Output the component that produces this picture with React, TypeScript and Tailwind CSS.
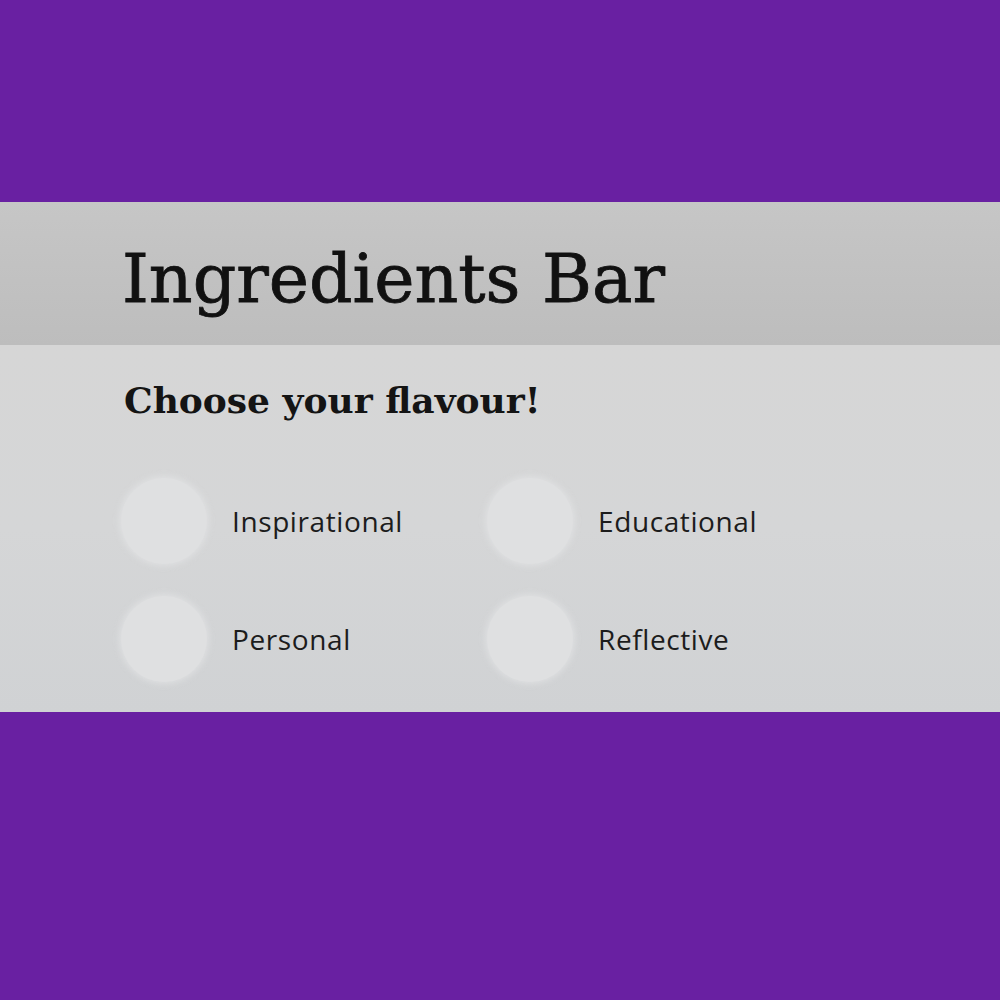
const options = ['Inspirational', 'Educational', 'Personal', 'Reflective']

export default function App() {
  return (
    <div className="w-[1000px] h-[1000px] bg-[#6920a2] flex flex-col">
      <div className="h-[202px]" />
      <div className="h-[510px] flex flex-col">
        <div className="h-[143px] bg-gradient-to-b from-[#c6c6c6] to-[#bdbdbd] pl-[122px] pt-[43px]">
          <h1 className="text-[68px] leading-none text-[#111] [-webkit-text-stroke:0.8px_#111] [font-family:'DejaVu_Serif',serif]">
            Ingredients Bar
          </h1>
        </div>
        <div className="flex-1 bg-gradient-to-b from-[#d6d6d6] via-[#d5d6d7] to-[#d0d2d4] pl-[121px] pt-[37px]">
          <h2 className="text-[36px] leading-none font-bold text-[#141414] pl-[3px] [font-family:'DejaVu_Serif',serif]">
            Choose your flavour!
          </h2>
          <div className="grid grid-cols-[366px_1fr] gap-y-[32px] mt-[60px]">
            {options.map((o) => (
              <label key={o} className="flex items-center gap-[25px]">
                <span className="w-[86px] h-[86px] rounded-full bg-[#dfe0e1] shadow-[0_0_6px_2px_rgba(225,226,227,0.8)]" />
                <span className="text-[28px] tracking-[0.6px] text-[#1c1c1c] [font-family:'Open_Sans',sans-serif]">{o}</span>
              </label>
            ))}
          </div>
        </div>
      </div>
    </div>
  )
}
